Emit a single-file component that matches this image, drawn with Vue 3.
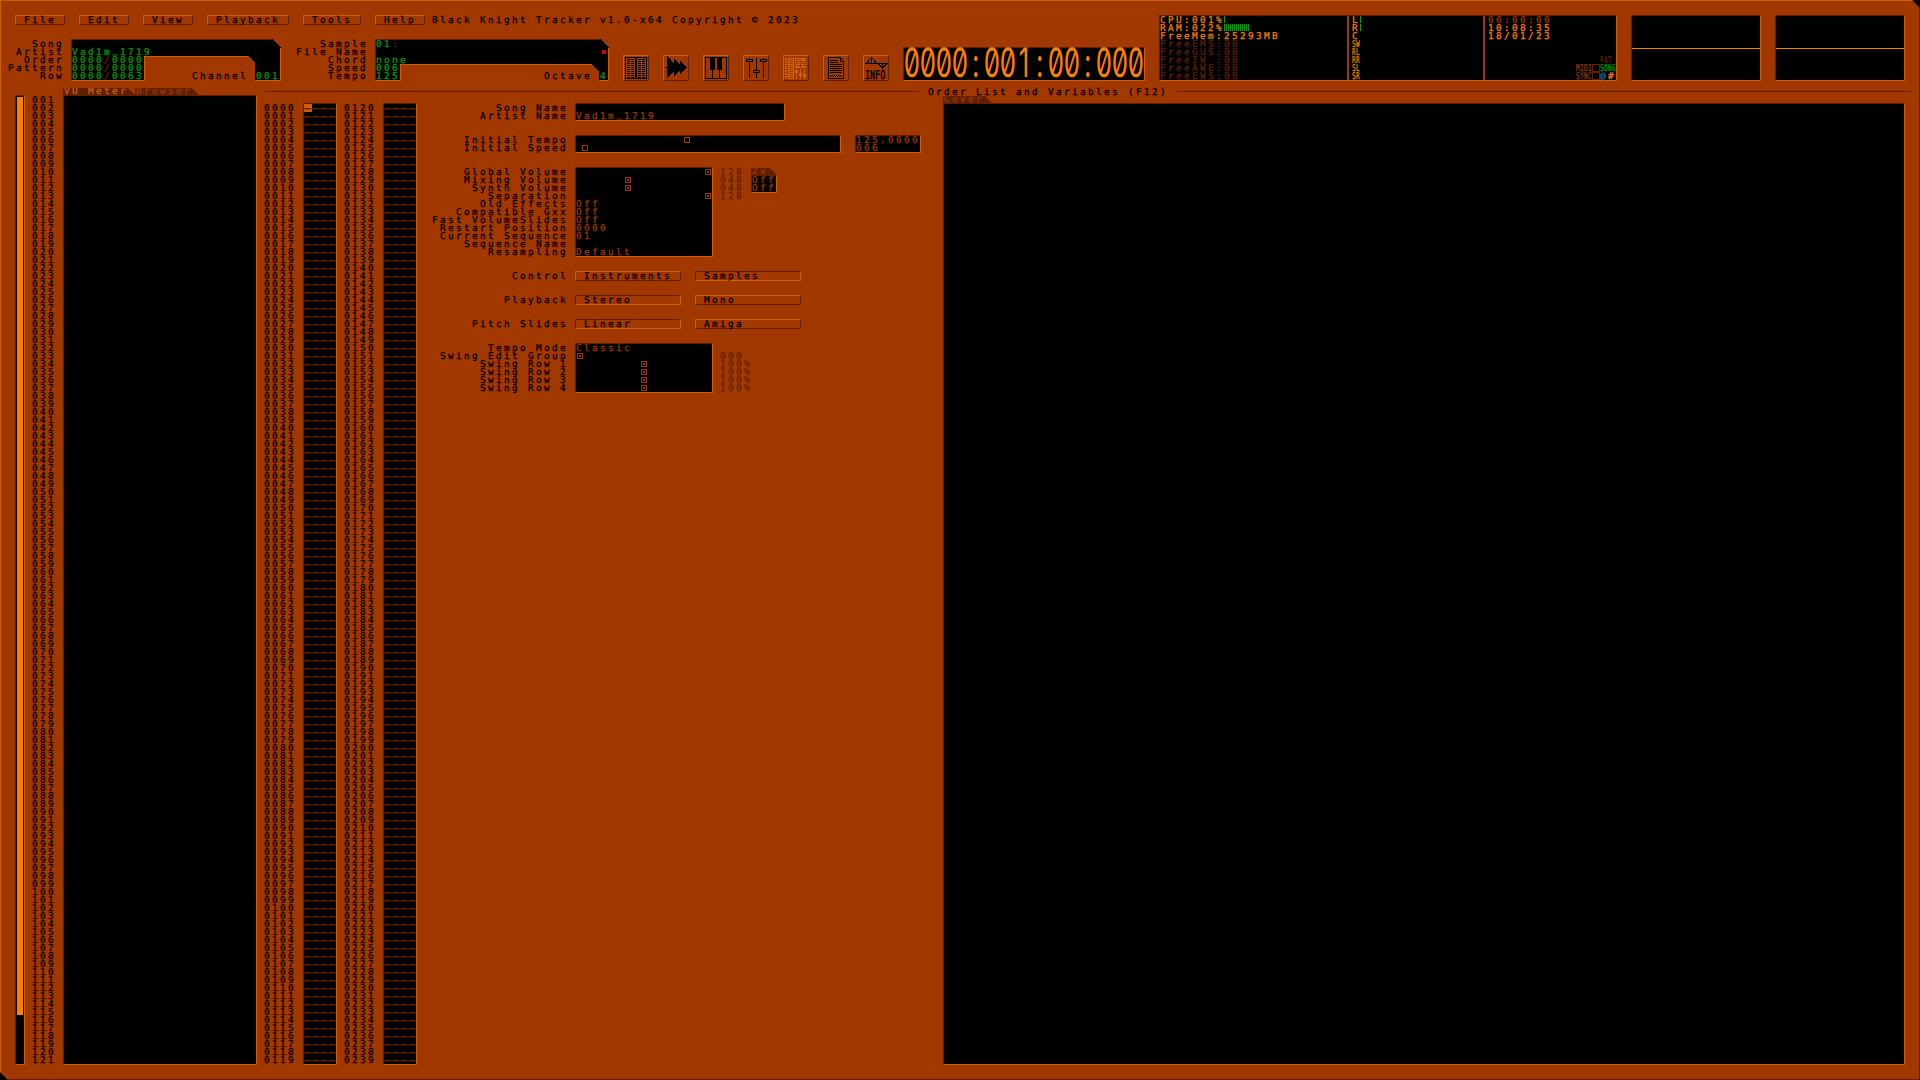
<script setup>
const menus = ['File', 'Edit', 'View', 'Playback', 'Tools', 'Help']
const pad = (n, w) => String(n).padStart(w, '0')
const range = (from, count, w) => Array.from({ length: count }, (_, i) => pad(from + i, w)).join('\n')

const songLabels = ['Song', 'Artist', 'Order', 'Pattern', 'Row']
const sampleLabels = ['Sample', 'File Name', 'Chord', 'Speed', 'Tempo']

const channels = range(1, 121, 3)
const orders = [
  { numbers: range(0, 120, 4), cursor: true },
  { numbers: range(120, 120, 4), cursor: false },
]
const dashes = Array.from({ length: 120 }, () => '————').join('\n')

const ramBars = 13
const clock = '0000:001:00:000'.split('')
const freeRows = ['EMS', 'GUS', 'IW ', 'AWE', 'EWS']
const speakers = ['SW', 'RL', 'RR', 'SL', 'SR']

const mixRows = [
  { label: 'Global Volume', pos: 129 },
  { label: 'Mixing Volume', pos: 49 },
  { label: 'Synth Volume', pos: 49 },
  { label: 'Separation', pos: 129 },
  { label: 'Old Effects', text: 'Off' },
  { label: 'Compatible Gxx', text: 'Off' },
  { label: 'Fast VolumeSlides', text: 'Off' },
  { label: 'Restart Position', text: '0000' },
  { label: 'Current Sequence', text: '01' },
  { label: 'Sequence Name', text: ' ' },
  { label: 'Resampling', text: 'Default' },
]
const mixValues = ['128', '048', '048', '128']
const toggles = [
  { label: 'Control', a: 'Instruments', b: 'Samples', on: 'b' },
  { label: 'Playback', a: 'Stereo', b: 'Mono', on: 'a' },
  { label: 'Pitch Slides', a: 'Linear', b: 'Amiga', on: 'a' },
]
const swingRows = [
  { label: 'Tempo Mode', text: 'Classic' },
  { label: 'Swing Edit Group', pos: 1 },
  { label: 'Swing Row 1', pos: 65 },
  { label: 'Swing Row 2', pos: 65 },
  { label: 'Swing Row 3', pos: 65 },
  { label: 'Swing Row 4', pos: 65 },
]
const swingValues = ['000', '100%', '100%', '100%', '100%']
</script>

<template>
  <div class="frame">
    <header class="header">
      <div class="left">
        <nav class="menu">
          <button v-for="m in menus" :key="m" class="raised menu-item">{{ m }}</button>
          <span class="title">Black Knight Tracker v1.0-x64 Copyright © 2023</span>
        </nav>
        <div class="strip">
          <div class="labels song-labels"><div v-for="l in songLabels" :key="l">{{ l }}</div></div>
          <div class="info song">
            <svg class="shape" width="210" height="42" shape-rendering="crispEdges">
              <path d="M0 0H201L210 9V42H184V24L177 17H74V42H0Z" fill="#000" />
              <path d="M.5 42V.5H201" fill="none" stroke="#602000" />
              <path d="M209.5 9V41.5H184M177 17.5H73.5V41.5H0" fill="none" stroke="#d06000" />
            </svg>
            <div class="row"> </div>
            <div class="row">Vad1m<span class="under">_</span>1719</div>
            <div class="row">0000<i>/</i>0000</div>
            <div class="row">0000<i>/</i>0000</div>
            <div class="row">0000<i>/</i>0063<b class="channel">Channel</b>001</div>
          </div>
          <div class="labels sample-labels"><div v-for="l in sampleLabels" :key="l">{{ l }}</div></div>
          <div class="info sample">
            <svg class="shape" width="234" height="42" shape-rendering="crispEdges">
              <path d="M0 0H225L234 9V42H224V33L216 25H26V42H0Z" fill="#000" />
              <path d="M.5 42V.5H225" fill="none" stroke="#602000" />
              <path d="M233.500 9V41.500H224M217 25.500H25.500V41.500H0" fill="none" stroke="#d06000" />
              <rect x="227" y="11" width="4" height="4" fill="#e00000" />
            </svg>
            <div class="row">01<i>:</i></div>
            <div class="row"> </div>
            <div class="row">none</div>
            <div class="row">006</div>
            <div class="row">125<b class="octave">Octave</b>4</div>
          </div>

          <div class="tools">
            <button class="raised tool">
              <svg width="24" height="24" shape-rendering="crispEdges">
                <path d="M1.500 1.500H22.500V22.500H1.500Z" fill="none" stroke="#000" />
                <path d="M12 1V23" stroke="#000" stroke-width="2" />
                <path d="M4.500 3V22M15.500 3V22" stroke="#000" stroke-width="3" stroke-dasharray="1 1" />
                <path d="M8.500 3V22M19.500 3V22" stroke="#000" stroke-width="3" stroke-dasharray="1 1" />
              </svg>
            </button>
            <button class="raised tool">
              <svg width="24" height="24" shape-rendering="crispEdges">
                <path d="M1 11H3V0H4L10 8V3H11L16 9V5H17L23 11.500L17 18H16V14L11 20H10V15L4 22H3V12H1Z" />
              </svg>
            </button>
            <button class="raised tool">
              <svg width="24" height="24" shape-rendering="crispEdges">
                <path d="M1.500 1.500H22.500V22.500H1.500Z" fill="none" stroke="#000" />
                <path d="M6 1H11V14H9V23H8V14H6ZM13 1H18V14H16V23H15V14H13Z" />
              </svg>
            </button>
            <button class="raised tool">
              <svg width="24" height="24" shape-rendering="crispEdges" fill="none" stroke="#000">
                <path d="M5.500 2V3M5.500 6V22M12.500 2V14M12.500 17V22M19.500 2V3M19.500 6V22" />
                <path d="M2.500 3.500H8.500V5.500H2.500ZM9.500 14.500H15.500V16.500H9.500ZM16.500 3.500H22.500V5.500H16.500Z" />
              </svg>
            </button>
            <button class="raised tool">
              <svg width="24" height="24" shape-rendering="crispEdges" fill="none" stroke="#d06000">
                <path d="M2 2V23" stroke-width="2" stroke-dasharray="2 1" />
                <path d="M6.500 2V23" stroke-width="5" stroke-dasharray="1 1" />
                <path d="M4.500 2V23M9.500 2V23" />
                <path d="M11 2H22V5H11ZM11 6H16V9H11ZM17 6H22V9H17ZM11 10H16V12H11ZM17 10H22V12H17Z" fill="#d06000" stroke="none" />
                <path d="M12 3.500H17M12 7.500H15M18 7.500H22" stroke="#a03800" />
                <path d="M12.500 13V23M16.500 13V23M20.500 13V23" />
                <path d="M11.500 14.500H13.500V16.500H11.500ZM15.500 17.500H17.500V19.500H15.500ZM19.500 18.500H21.500V20.500H19.500Z" />
              </svg>
            </button>
            <button class="raised tool">
              <svg width="24" height="24" shape-rendering="crispEdges" fill="none" stroke="#000">
                <path d="M4.500 1.500H16.500L19.500 4.500V22.500H4.500ZM16.500 1.500V5H19" />
                <path d="M6 4.500H14M6 6.500H14M6 8.500H18M6 10.500H18M6 12.500H18M6 14.500H18M6 16.500H18" />
                <path d="M6 19.500H18" stroke-dasharray="1 1" />
                <path d="M7 20.500H18" stroke-dasharray="1 1" />
              </svg>
            </button>
            <button class="raised tool info-tool">
              <svg width="24" height="14" shape-rendering="crispEdges" fill="none" stroke="#000">
                <path d="M1 7.500H24M1.500 7.500L7.500 1.500L18.500 12L22.500 8M7.500 1V8M18.500 7V12M4.500 5V8M10.500 5V8M15.500 8V10" />
              </svg>
              <span>INFO</span>
            </button>
          </div>

          <div class="box clock">
            <span v-for="(c, i) in clock" :key="i"><em>{{ c }}</em></span>
          </div>
        </div>
      </div>

      <div class="box stats">
        <div class="stat system">
          <div class="row">CPU:001%<u class="bars" :style="{ width: '1px' }"></u></div>
          <div class="row">RAM:022%<u class="bars" :style="{ width: ramBars * 2 - 1 + 'px' }"></u></div>
          <div class="row">FreeMem:25293MB</div>
          <div v-for="f in freeRows" :key="f" class="row dim">Free{{ f }}:0B</div>
        </div>
        <div class="stat levels">
          <div class="row">L<u class="bars" :style="{ width: '1px' }"></u></div>
          <div class="row">R<u class="bars" :style="{ width: '1px' }"></u></div>
          <div class="row">C</div>
          <div v-for="s in speakers" :key="s" class="row"><s class="narrow">{{ s }}</s></div>
        </div>
        <div class="stat times">
          <div class="row mid">00:00:00</div>
          <div class="row">10:08:35</div>
          <div class="row">18/01/23</div>
          <div class="sync">
            <div class="row dim"><s class="narrow">PAT</s></div>
            <div class="row mid"><s class="narrow">MIDI</s><u class="led"></u><s class="narrow on">SONG</s></div>
            <div class="row mid"><s class="narrow">SYNC</s><u class="led"></u><span class="at">@</span><span class="hash">#</span></div>
          </div>
        </div>
      </div>
      <div class="box scope"><div class="wave"></div></div>
      <div class="box scope"><div class="wave"></div></div>
    </header>

    <main class="main">
      <div class="box fader"><div class="fill"></div></div>
      <div class="numbers channels">{{ channels }}</div>
      <section class="vu">
        <div class="tabs">
          <div class="tab active">VU Meter</div>
          <div class="tab">Browser</div>
        </div>
        <div class="box grow"></div>
      </section>

      <section class="page">
        <div class="page-title"><hr class="l1" /><h1>Order List and Variables (F12)</h1><hr class="l2" /></div>
        <div class="content">
          <template v-for="(o, i) in orders" :key="i">
            <div class="numbers order-numbers">{{ o.numbers }}</div>
            <div class="box order-list"><span v-if="o.cursor" class="cursor"></span><div class="dashes"><b v-if="o.cursor">—</b>{{ o.cursor ? dashes.slice(1) : dashes }}</div></div>
          </template>

          <div class="form">
            <div class="group">
              <div class="labels"><div>Song Name</div><div>Artist Name</div></div>
              <div class="box names"><div class="row"> </div><div class="row">Vad1m<span class="under">_</span>1719</div></div>
            </div>
            <div class="group">
              <div class="labels"><div>Initial Tempo</div><div>Initial Speed</div></div>
              <div class="box tempo">
                <div class="row"><u class="knob" :style="{ marginLeft: '108px' }"></u></div>
                <div class="row"><u class="knob" :style="{ marginLeft: '6px' }"></u></div>
              </div>
              <div class="box tempo-values"><div class="row">125.0000</div><div class="row">006</div></div>
            </div>
            <div class="group">
              <div class="labels"><div v-for="r in mixRows" :key="r.label">{{ r.label }}</div></div>
              <div class="box settings">
                <div v-for="r in mixRows" :key="r.label" class="row"><u v-if="r.pos" class="knob dot" :style="{ marginLeft: r.pos + 'px' }"></u>{{ r.text }}</div>
              </div>
              <div class="values"><div v-for="(v, i) in mixValues" :key="i" class="row">{{ v }}</div></div>
              <div class="double">
                <div class="tab">2x</div>
                <div class="box"><div class="row">Off</div><div class="row">Off</div></div>
              </div>
            </div>
            <div v-for="t in toggles" :key="t.label" class="group">
              <div class="labels"><div>{{ t.label }}</div></div>
              <button class="raised toggle" :class="{ pressed: t.on === 'a' }">{{ t.a }}</button>
              <button class="raised toggle second" :class="{ pressed: t.on === 'b' }">{{ t.b }}</button>
            </div>
            <div class="group">
              <div class="labels"><div v-for="r in swingRows" :key="r.label">{{ r.label }}</div></div>
              <div class="box settings">
                <div v-for="r in swingRows" :key="r.label" class="row"><u v-if="r.pos" class="knob dot" :style="{ marginLeft: r.pos + 'px' }"></u>{{ r.text }}</div>
              </div>
              <div class="values swing-values"><div v-for="(v, i) in swingValues" :key="i" class="row">{{ v }}</div></div>
            </div>
          </div>

          <section class="cover">
            <div class="tab">Cover</div>
            <div class="box grow"></div>
          </section>
        </div>
      </section>
    </main>
  </div>
</template>

<style>
body { background: #000; }
</style>

<style scoped>
.frame {
  --bg: #a03800;
  --lt: #d06000;
  --dk: #602000;
  --or: #ff8000;
  --gr: #00a000;
  width: 1920px;
  height: 1080px;
  overflow: hidden;
  background: var(--bg);
  box-shadow: inset 1px 1px 0 var(--lt), inset -1px -1px 0 var(--dk);
  clip-path: polygon(0 0, 1912px 0, 1920px 8px, 1920px 1080px, 8px 1080px, 0 1072px);
  font-family: "DejaVu Sans Mono", "Liberation Mono", monospace;
  font-size: 9.3px;
  line-height: 8px;
  letter-spacing: 2.401px;
  -webkit-text-stroke: .25px currentColor;
  text-rendering: geometricPrecision;
  white-space: pre;
  color: #000;
}
.frame * { box-sizing: border-box; }
.frame div, .frame nav, .frame header, .frame main, .frame section { flex-shrink: 0; }
button { display: flex; align-items: flex-start; font: inherit; letter-spacing: inherit; color: inherit; background: none; padding: 0; margin: 0; border-radius: 0; text-align: left; white-space: pre; text-rendering: inherit; }
u, s, i, em, b { text-decoration: none; font-style: normal; font-weight: normal; }
.row { height: 8px; padding-top: 1px; display: flex; white-space: pre; }
.under { transform: translateY(-2px); }
.box { background: #000; border: 1px solid; border-color: var(--dk) var(--lt) var(--lt) var(--dk); color: var(--bg); }
.raised { border: 1px solid; border-color: var(--lt) var(--dk) var(--dk) var(--lt); }
.raised.pressed { border-color: var(--dk) var(--lt) var(--lt) var(--dk); }
.labels { text-align: right; white-space: pre; }
.labels > div { height: 8px; padding-top: 1px; }

.header { display: flex; padding: 15px 0 0 15px; height: 88px; white-space: normal; }
.left { width: 1130px; display: flex; flex-direction: column; }
.menu { display: flex; height: 24px; }
.menu-item { height: 10px; padding: 1px 8px 0; margin-right: 14px; }
.title { white-space: pre; margin: 2px 0 0 -7px; }
.strip { display: flex; height: 42px; margin-left: -15px; }
.strip .labels { padding-top: 1px; }
.song-labels { width: 64px; }
.info { position: relative; padding: 1px; color: var(--gr); margin-left: 7px; }
.info i { color: var(--dk); }
.info b { color: #000; }
.info .row { position: relative; }
.song { width: 210px; }
.sample { width: 234px; }
.shape { position: absolute; left: 0; top: 0; }
.channel { margin: 0 8px 0 48px; }
.octave { margin: 0 8px 0 144px; }
.sample-labels { width: 87px; }
.tools { display: flex; gap: 14px; padding-top: 16px; margin-left: 14px; }
.tool { width: 26px; height: 26px; flex-direction: column; }
.tool svg { display: block; flex: none; }
.info-tool span { font-size: 8.4px; letter-spacing: 0; line-height: 10px; height: 10px; transform: scaleY(1.45); padding-left: 1px; }
.clock { width: 242px; height: 34px; margin: 8px 0 0 14px; display: flex; color: var(--or); }
.clock span { width: 16px; height: 32px; display: flex; justify-content: center; align-items: center; }
.clock em { font: 400 25px/32px "Inter", sans-serif; font-feature-settings: "zero"; letter-spacing: 0; transform: scale(1.03, 1.62); -webkit-text-stroke: 0; }

.stats { width: 458px; height: 66px; margin-left: 14px; display: flex; color: var(--or); }
.stat { height: 64px; }
.system { width: 187px; }
.levels { width: 136px; border-left: 2px solid var(--bg); padding-left: 3px; }
.times { width: 133px; border-left: 2px solid var(--bg); padding-left: 3px; display: flex; flex-direction: column; }
.dim { color: var(--dk); }
.mid { color: var(--bg); }
.bars { height: 7px; margin-top: -1px; background: repeating-linear-gradient(90deg, var(--gr) 0 1px, transparent 1px 2px); }
.narrow { display: block; flex: none; letter-spacing: .555px; transform: scaleX(.65); transform-origin: 0 0; }
.sync { margin-top: 16px; display: flex; flex-direction: column; align-items: flex-end; }
.sync .row { width: 40px; }
.sync .row.dim { width: 16px; }
.sync .narrow { width: 16px; }
.led { width: 8px; height: 8px; margin-top: -1px; border: 1px solid var(--dk); flex: none; }
.on { color: var(--gr); }
.at { color: #306890; }
.hash { color: var(--or); }
.scope { width: 130px; height: 66px; margin-left: 14px; padding-top: 32px; }
.wave { height: 1px; background: var(--or); }

.main { display: flex; height: 977px; padding-left: 15px; }
.fader { width: 10px; height: 970px; margin-top: 7px; padding: 1px; }
.fill { height: 918px; background: var(--or); }
.numbers { white-space: pre; }
.channels { width: 24px; margin: 9px 7px 0 7px; }
.vu { width: 194px; display: flex; flex-direction: column; }
.tabs { display: flex; }
.tab { height: 7px; line-height: 8px; background: var(--dk); color: var(--bg); padding-left: 1px; clip-path: polygon(0 0, calc(100% - 7px) 0, 100% 7px, 0 7px); }
.tabs .tab { width: 72px; }
.tabs .tab.active { color: var(--lt); }
.tabs .tab:last-child { width: 64px; }
.grow { flex: 1; }
.page { width: 1656px; margin-left: 7px; display: flex; flex-direction: column; }
.page-title { display: flex; height: 8px; }
.page-title hr { height: 1px; border: 0; margin: 3px 0 0; background: var(--dk); }
.l1 { width: 656px; }
.l2 { width: 736px; }
h1 { font: inherit; margin: 0 8px; padding-top: 1px; width: 240px; }
.content { display: flex; flex: 1; }
.order-numbers { width: 32px; margin-top: 9px; }
.order-list { position: relative; width: 34px; height: 962px; margin: 7px 7px 0; }
.dashes { position: relative; font-size: 11.627px; letter-spacing: 1px; white-space: pre; -webkit-text-stroke: 0; }
.dashes b { color: #000; }
.cursor { position: absolute; left: 0; top: 0; width: 8px; height: 8px; background: var(--lt); }
.form { width: 519px; padding-top: 7px; display: flex; flex-direction: column; gap: 14px; }
.group { display: flex; }
.group .labels { width: 144px; padding-top: 1px; margin-right: 7px; }
.names { width: 210px; }
.tempo { width: 266px; }
.tempo-values { width: 66px; margin-left: 14px; }
.settings { width: 138px; }
.knob { width: 6px; height: 6px; border: 1px solid var(--bg); flex: none; }
.knob.dot { background: linear-gradient(var(--bg), var(--bg)) center / 2px 2px no-repeat; }
.values { color: var(--dk); padding-top: 1px; margin-left: 7px; width: 24px; }
.swing-values { padding-top: 9px; width: 32px; }
.double { margin-left: 7px; width: 26px; padding-top: 1px; }
.toggle { width: 106px; height: 10px; padding: 1px 0 0 8px; }
.toggle.second { margin-left: 14px; }
.cover { width: 962px; height: 969px; display: flex; flex-direction: column; }
.cover .tab { width: 49px; }
</style>
